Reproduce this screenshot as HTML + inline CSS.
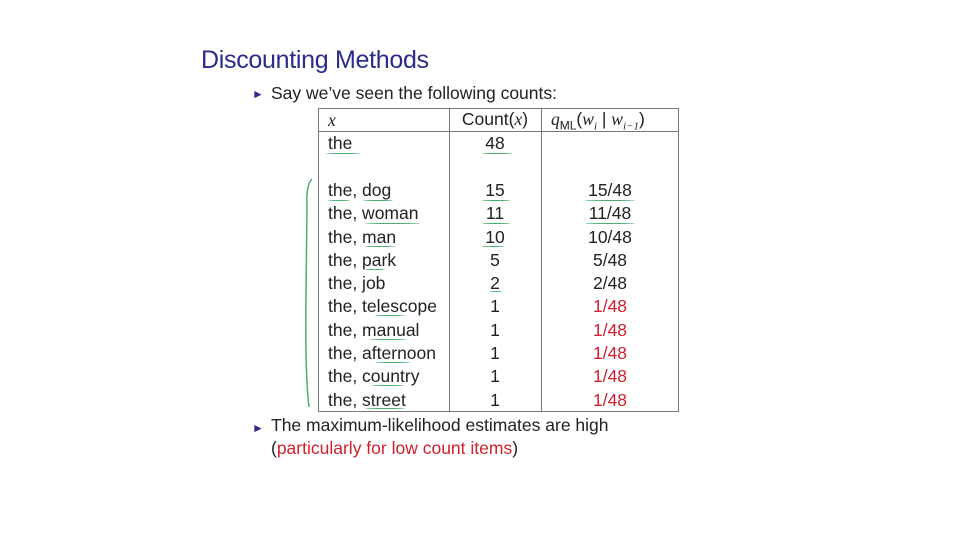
<!DOCTYPE html>
<html><head><style>
body{margin:0;width:960px;height:540px;background:#fff;overflow:hidden;font-family:"Liberation Sans",sans-serif;color:#222;position:relative}
.a{position:absolute;white-space:nowrap;font-size:17.5px;line-height:20px}
.c{text-align:center}
.r{color:#d0202e}
.ul{position:absolute;height:0;border-top:1.5px solid #4caf70;border-radius:50%}
</style></head><body>
<div class="a" style="left:201px;top:44px;font-size:25px;line-height:32px;color:#2b2b8c;letter-spacing:-0.3px">Discounting Methods</div>
<div class="a" style="left:252px;top:84px;font-size:12px;color:#2b2b8c">&#9658;</div>
<div class="a" style="left:271px;top:83px">Say we’ve seen the following counts:</div>
<div style="position:absolute;left:318px;top:108px;width:359px;height:302px;border:1.5px solid #777"></div>
<div style="position:absolute;left:449px;top:108px;width:0;height:304px;border-left:1.5px solid #777"></div>
<div style="position:absolute;left:541px;top:108px;width:0;height:304px;border-left:1.5px solid #777"></div>
<div style="position:absolute;left:318px;top:131px;width:361px;height:0;border-top:1.5px solid #777"></div>
<div class="a" style="left:328px;top:110px;font-family:'Liberation Serif',serif;font-style:italic">x</div>
<div class="a c" style="left:449px;width:92px;top:109px">Count(<i style="font-family:'Liberation Serif',serif">x</i>)</div>
<div class="a" style="left:551px;top:109px"><i style="font-family:'Liberation Serif',serif">q</i><sub style="font-size:12px">ML</sub>(<i style="font-family:'Liberation Serif',serif">w<sub style="font-size:11px">i</sub></i> | <i style="font-family:'Liberation Serif',serif">w<sub style="font-size:11px">i−1</sub></i>)</div>
<div class="a" style="left:328px;top:133px">the</div>
<div class="a c" style="left:449px;width:92px;top:133px">48</div>
<div class="a" style="left:328px;top:179px;line-height:23.3px">the, dog<br>the, woman<br>the, man<br>the, park<br>the, job<br>the, telescope<br>the, manual<br>the, afternoon<br>the, country<br>the, street</div>
<div class="a c" style="left:449px;width:92px;top:179px;line-height:23.3px">15<br>11<br>10<br>5<br>2<br>1<br>1<br>1<br>1<br>1</div>
<div class="a c" style="left:541px;width:138px;top:179px;line-height:23.3px">15/48<br>11/48<br>10/48<br>5/48<br>2/48<br><span class="r">1/48<br>1/48<br>1/48<br>1/48<br>1/48</span></div>
<div class="ul" style="left:326px;top:153px;width:34px"></div>
<div class="ul" style="left:482px;top:153px;width:30px"></div>
<div class="ul" style="left:328px;top:200px;width:22px"></div>
<div class="ul" style="left:363px;top:200px;width:30px"></div>
<div class="ul" style="left:482px;top:200px;width:28px"></div>
<div class="ul" style="left:585px;top:200px;width:50px"></div>
<div class="ul" style="left:365px;top:223px;width:55px"></div>
<div class="ul" style="left:482px;top:223px;width:28px"></div>
<div class="ul" style="left:585px;top:223px;width:50px"></div>
<div class="ul" style="left:365px;top:246px;width:30px"></div>
<div class="ul" style="left:482px;top:246px;width:22px"></div>
<div class="ul" style="left:365px;top:269px;width:20px"></div>
<div class="ul" style="left:490px;top:291px;width:12px"></div>
<div class="ul" style="left:375px;top:315px;width:30px"></div>
<div class="ul" style="left:370px;top:339px;width:36px"></div>
<div class="ul" style="left:375px;top:362px;width:35px"></div>
<div class="ul" style="left:372px;top:385px;width:32px"></div>
<div class="ul" style="left:365px;top:408px;width:40px"></div>
<svg style="position:absolute;left:300px;top:175px" width="20" height="240"><path d="M12 4 Q6 10 7 30 L6 120 Q5 200 9 232" fill="none" stroke="#4caf70" stroke-width="1.5"/></svg>
<div class="a" style="left:252px;top:418px;font-size:12px;color:#2b2b8c">&#9658;</div>
<div class="a" style="left:271px;top:415px">The maximum-likelihood estimates are high</div>
<div class="a" style="left:271px;top:438px">(<span class="r">particularly for low count items</span>)</div>
</body></html>
